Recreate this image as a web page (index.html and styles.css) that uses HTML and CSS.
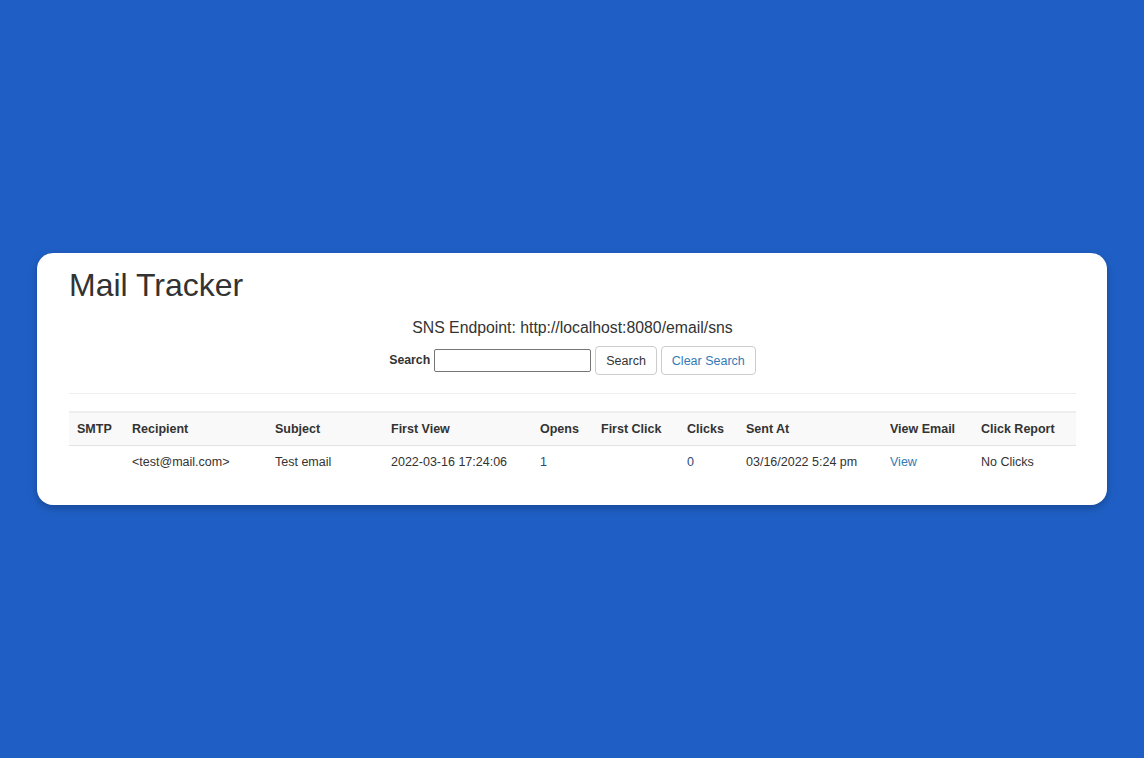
FILE: index.html
```html
<!DOCTYPE html>
<html>
<head>
<meta charset="utf-8">
<title>Mail Tracker</title>
<link rel="stylesheet" href="styles.css">
</head>
<body>
<main class="page">
  <section class="card">
    <h1 class="title">Mail Tracker</h1>
    <div class="endpoint">SNS Endpoint: http://localhost:8080/email/sns</div>
    <form class="search">
      <label class="search-label" for="q">Search</label>
      <input id="q" class="search-input" type="text">
      <button type="button" class="btn">Search</button>
      <button type="button" class="btn btn-link">Clear Search</button>
    </form>
    <hr class="rule">
    <table class="table">
      <colgroup>
        <col class="c1"><col class="c2"><col class="c3"><col class="c4"><col class="c5">
        <col class="c6"><col class="c7"><col class="c8"><col class="c9"><col class="c10">
      </colgroup>
      <thead>
        <tr>
          <th>SMTP</th><th>Recipient</th><th>Subject</th><th>First View</th><th>Opens</th>
          <th>First Click</th><th>Clicks</th><th>Sent At</th><th>View Email</th><th>Click Report</th>
        </tr>
      </thead>
      <tbody>
        <tr>
          <td></td>
          <td>&lt;test@mail.com&gt;</td>
          <td>Test email</td>
          <td>2022-03-16 17:24:06</td>
          <td class="num">1</td>
          <td></td>
          <td class="num">0</td>
          <td>03/16/2022 5:24 pm</td>
          <td><a class="link" href="#">View</a></td>
          <td>No Clicks</td>
        </tr>
      </tbody>
    </table>
  </section>
</main>
</body>
</html>
```
FILE: styles.css
```css
html, body {
  margin: 0;
  padding: 0;
  height: 100%;
}
body {
  background: #1f5fc5;
  font-family: "Liberation Sans", Arial, sans-serif;
  font-size: 12.5px;
  line-height: 1.42857;
  color: #333;
}
.page {
  height: 100%;
  display: flex;
  align-items: center;
  justify-content: center;
}
.card {
  width: 1070px;
  box-sizing: border-box;
  background: #fff;
  border-radius: 16px;
  box-shadow: 0 3px 8px rgba(0, 0, 0, 0.25);
  padding: 12px 31px 27px 32px;
}
.title {
  margin: 0;
  font-size: 32px;
  font-weight: 400;
  line-height: 40px;
  color: #333;
}
.endpoint {
  text-align: center;
  font-size: 15.8px;
  line-height: 20px;
  margin-top: 13px;
}
.search {
  display: flex;
  justify-content: center;
  align-items: center;
  margin-top: 8px;
  gap: 4px;
}
.search-label {
  font-weight: 700;
  font-size: 12.3px;
}
.search-input {
  width: 157px;
  height: 23px;
  box-sizing: border-box;
  border: 1px solid #767676;
  border-radius: 2px;
  padding: 1px 3px;
  margin: 0;
  font-family: inherit;
}
.btn {
  height: 29px;
  box-sizing: border-box;
  border: 1px solid #ccc;
  border-radius: 4px;
  background: #fff;
  padding: 0 10px;
  font-family: inherit;
  font-size: 12.5px;
  color: #333;
  margin: 0;
}
.btn-link {
  color: #337ab7;
}
.rule {
  border: 0;
  border-top: 1px solid #eee;
  margin: 18px 0 17px;
}
.table {
  width: 100%;
  table-layout: fixed;
  border-collapse: collapse;
  border-spacing: 0;
}
.c1 { width: 55px; }
.c2 { width: 143px; }
.c3 { width: 116px; }
.c4 { width: 149px; }
.c5 { width: 61px; }
.c6 { width: 86px; }
.c7 { width: 59px; }
.c8 { width: 144px; }
.c9 { width: 91px; }
.c10 { width: auto; }
.table th {
  text-align: left;
  font-weight: 700;
  background: #f9f9f9;
  border-top: 2px solid #eee;
  border-bottom: 1px solid #e2e2e2;
  padding: 7px 8px;
  line-height: 18px;
  white-space: nowrap;
}
.table td {
  padding: 7px 8px;
  line-height: 18px;
  white-space: nowrap;
}
.num {
  color: #2b4a78;
}
.link {
  color: #337ab7;
  text-decoration: none;
}
```
